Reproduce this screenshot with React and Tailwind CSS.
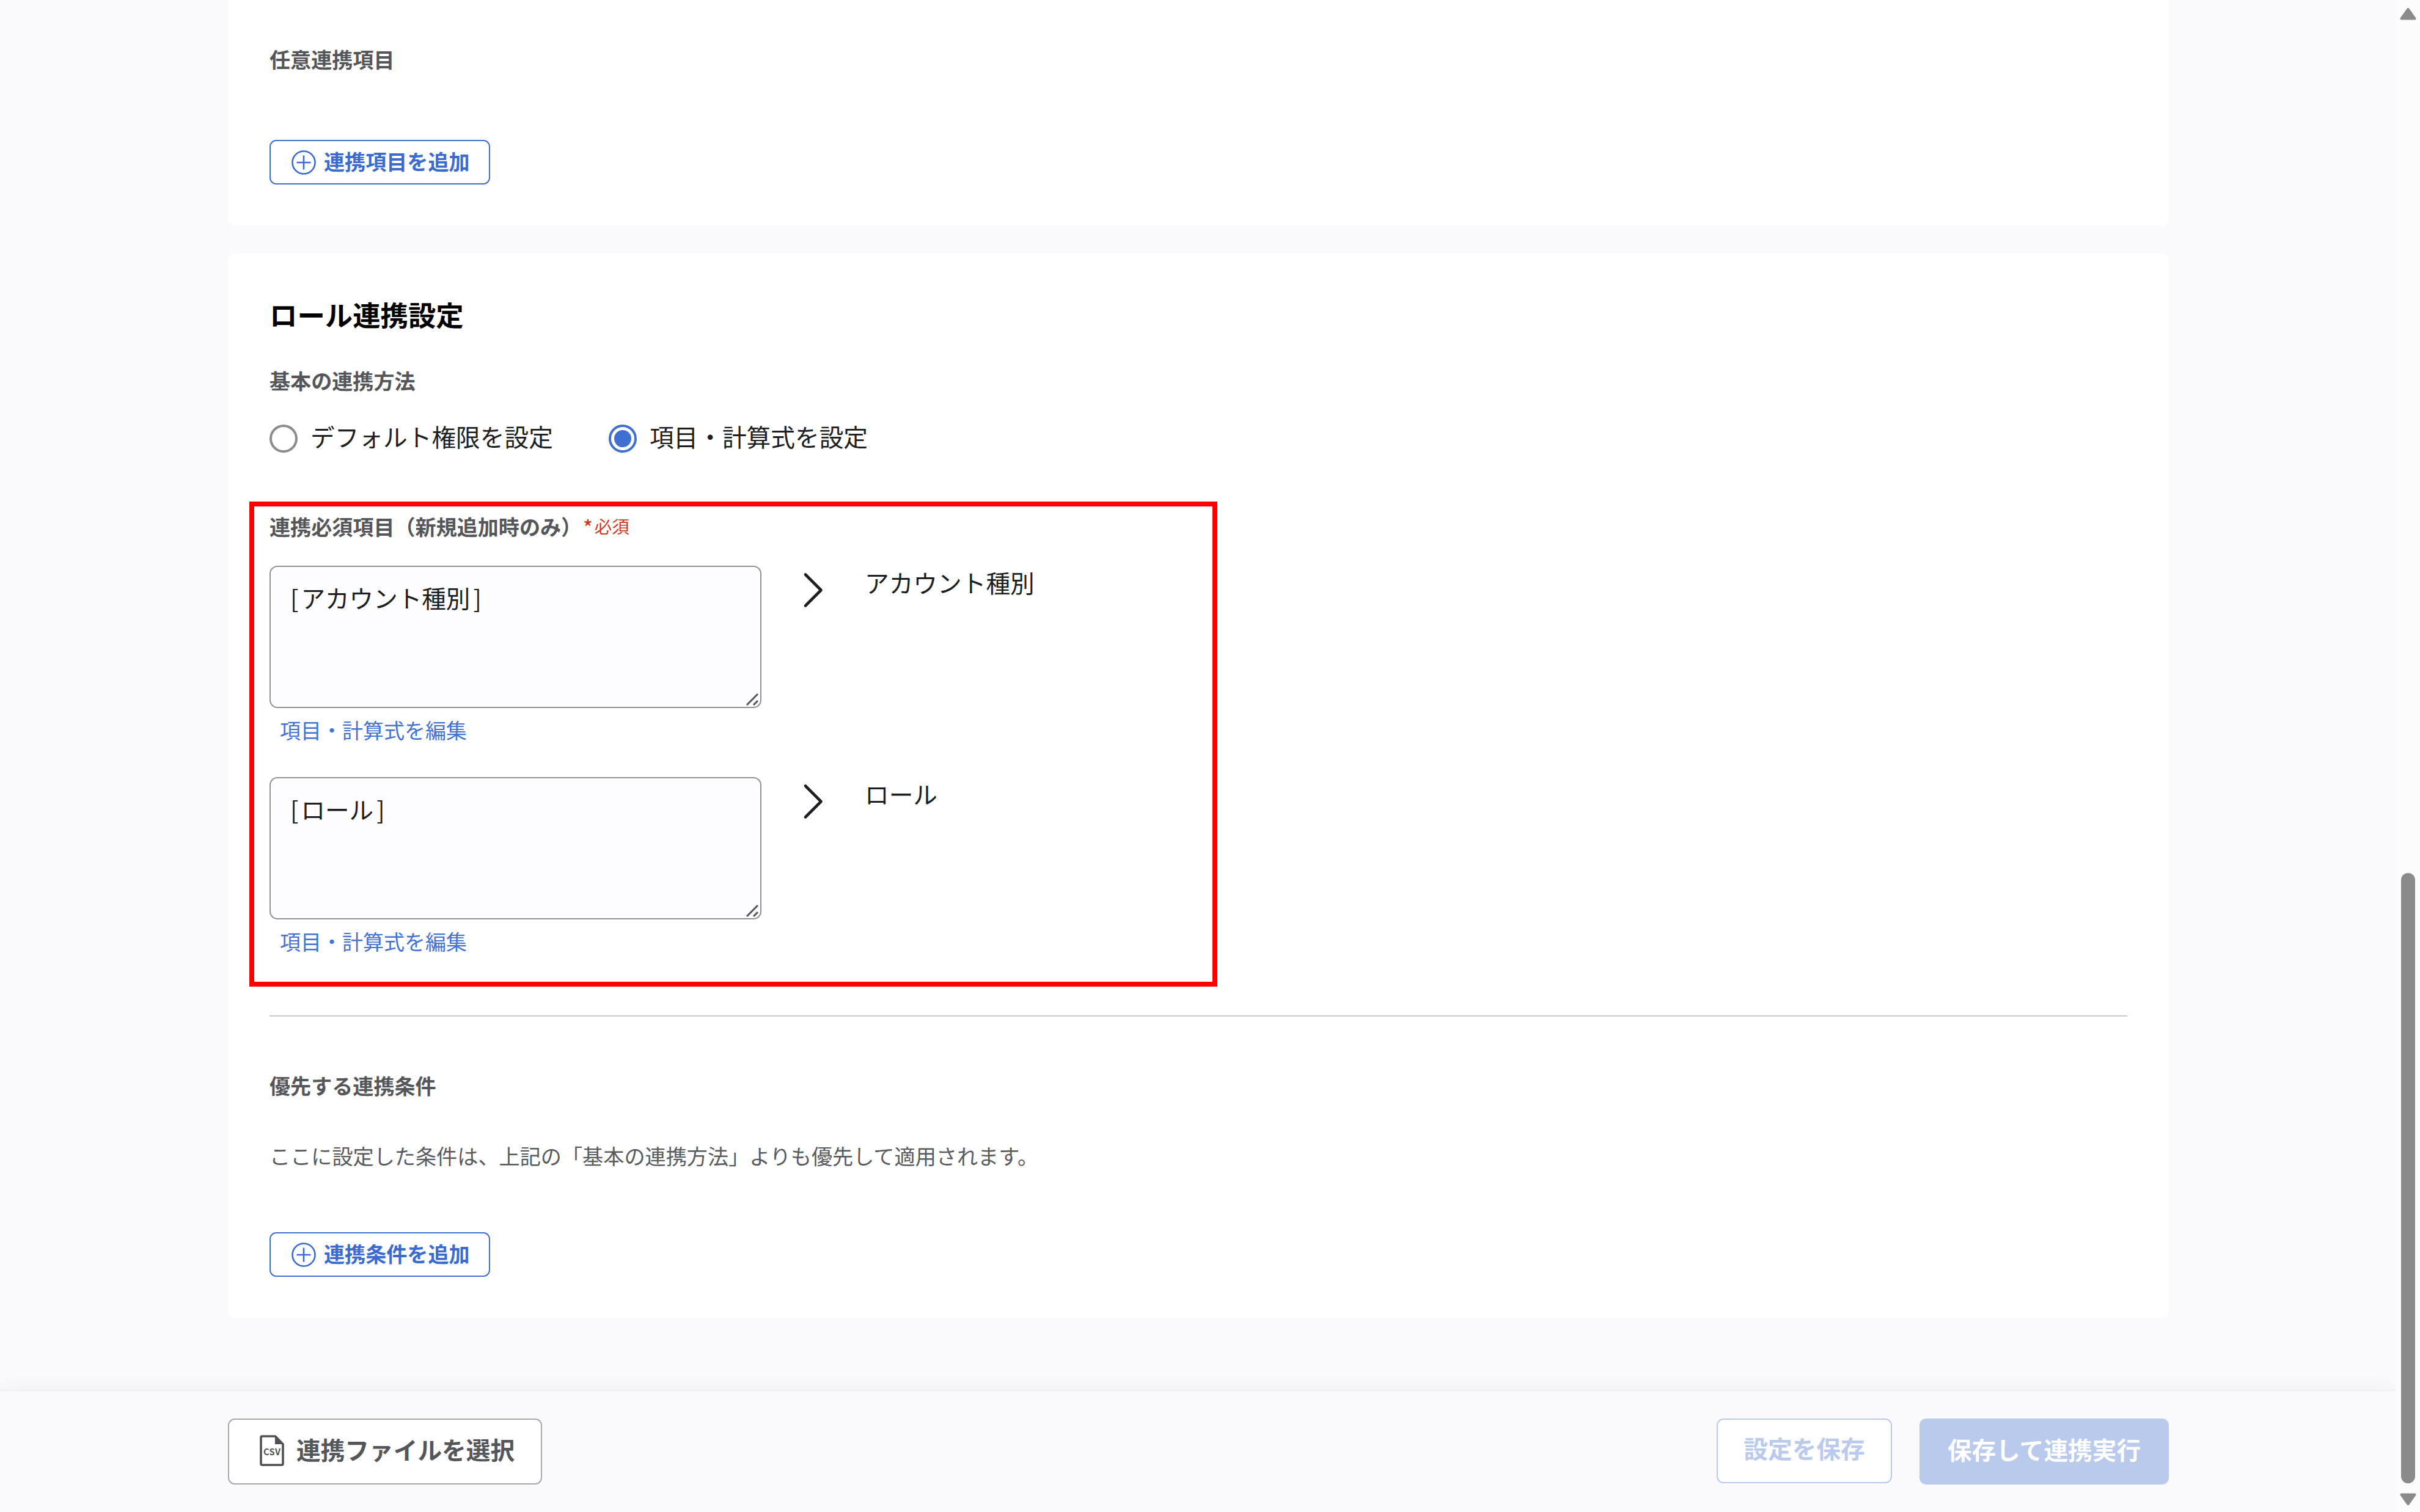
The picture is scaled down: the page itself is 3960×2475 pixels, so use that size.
import clsx from 'clsx';

const mappings = [
  { source: 'アカウント種別', target: 'アカウント種別' },
  { source: 'ロール', target: 'ロール' },
];

const AddButton = ({ label, className }) => (
  <button
    className={clsx(
      'flex h-[73px] w-[361px] items-center rounded-[11px] border-2 border-[#3f6fd1] bg-white pl-[34px] text-[#3b6bcf]',
      className
    )}
  >
    <svg className="h-10 w-10 shrink-0" viewBox="0 0 40 40" fill="none" stroke="currentColor" strokeWidth="2.6">
      <circle cx="20" cy="20" r="18.5" />
      <path d="M20 8.5v23M8.5 20h23" />
    </svg>
    <span className="ml-[13px] pb-[6px] text-[34.1px] leading-10 font-bold whitespace-nowrap">{label}</span>
  </button>
);

const Radio = ({ label, checked }) => (
  <label className="flex h-[46px] items-center gap-[21px]">
    <span
      className={clsx(
        'flex h-[46px] w-[46px] items-center justify-center rounded-full border-4 bg-white',
        checked ? 'border-[#3f6fd1]' : 'border-[#8c8c90]'
      )}
    >
      {checked && <span className="h-7 w-7 rounded-full bg-[#3f6fd1]"></span>}
    </span>
    <span className="pb-[9px] text-[39.7px] leading-10 whitespace-nowrap text-[#1d1e22]">{label}</span>
  </label>
);

const Subheading = ({ children, className }) => (
  <h3 className={clsx('text-[34.1px] leading-10 font-bold whitespace-nowrap text-[#55565a]', className)}>{children}</h3>
);

const MappingRow = ({ source, target }) => (
  <div className="flex items-start">
    <div className="w-[805px]">
      <div className="relative h-[233px] rounded-[13px] border-2 border-[#929296] bg-[#fdfdff] pt-5 pl-8 text-[39.6px] leading-[60px] text-[#1d1e22]">
        <span className="mr-1">[</span>
        {source}
        <span className="ml-[5px]">]</span>
        <svg className="absolute right-[3px] bottom-[2px] h-5 w-5" viewBox="0 0 20 20" stroke="#55565a" strokeWidth="3">
          <path d="M1 19L19 1M12 19L19 12" />
        </svg>
      </div>
      <a className="mt-4 ml-[17px] block text-[34px] leading-10 whitespace-nowrap text-[#4573d2]">項目・計算式を編集</a>
    </div>
    <svg
      className="mt-[11px] ml-[68px] h-[58px] w-[34px]"
      viewBox="0 0 34 58"
      fill="none"
      stroke="#1d1e22"
      strokeWidth="4.6"
      strokeLinecap="round"
      strokeLinejoin="round"
    >
      <path d="M4 3.5L29.5 29L4 54.5" />
    </svg>
    <span className="ml-[67px] text-[39.7px] leading-[54px] whitespace-nowrap text-[#1d1e22]">{target}</span>
  </div>
);

const CsvIcon = () => (
  <svg className="mb-1 h-[51px] w-10 shrink-0" viewBox="0 0 40 51" fill="none">
    <path d="M25.5 2H4Q2 2 2 4V47Q2 49 4 49H36Q38 49 38 47V15Z" stroke="#505155" strokeWidth="3.6" strokeLinejoin="round" />
    <path d="M25 1V15H39Z" fill="#505155" />
    <text x="20" y="33" textAnchor="middle" fontSize="14.5" fontWeight="700" textLength="28" fill="#505155">
      CSV
    </text>
  </svg>
);

const Scrollbar = () => (
  <div className="z-10 flex w-10 shrink-0 flex-col items-center bg-[#fcfcfd] pl-px">
    <svg className="mt-3 h-[21px] w-[27px] shrink-0" viewBox="0 0 27 21" fill="#8b8b8b" stroke="#8b8b8b" strokeWidth="4" strokeLinejoin="round">
      <path d="M13.5 3L24.5 18.5H2.5Z" />
    </svg>
    <div className="mt-[1396px] h-[999px] w-[23px] rounded-full bg-[#8b8b8b]"></div>
    <svg className="mt-4 h-[21px] w-[27px] shrink-0" viewBox="0 0 27 21" fill="#8b8b8b" stroke="#8b8b8b" strokeWidth="4" strokeLinejoin="round">
      <path d="M13.5 18L24.5 2.5H2.5Z" />
    </svg>
  </div>
);

export default function App() {
  return (
    <div className="flex h-[2475px] w-[3960px] overflow-hidden bg-[#fafafc] font-['Noto_Sans_CJK_JP',sans-serif]" lang="ja">
      <div className="flex w-[3920px] flex-col">
        <main className="h-[2275px] pl-[373px]">
          <section className="h-[369px] w-[3176px] rounded-b-xl bg-white px-[68px] pt-[76px]">
            <Subheading>任意連携項目</Subheading>
            <AddButton label="連携項目を追加" className="mt-[113px]" />
          </section>

          <section className="mt-[46px] h-[1742px] w-[3176px] rounded-xl bg-white px-[68px] pt-[69px]">
            <h2 className="text-[45.4px] leading-[60px] font-bold text-black">ロール連携設定</h2>
            <Subheading className="mt-[58px]">基本の連携方法</Subheading>
            <div className="mt-[53px] flex gap-[91px]">
              <Radio label="デフォルト権限を設定" />
              <Radio label="項目・計算式を設定" checked />
            </div>

            <div className="relative mt-[100px]">
              <div className="flex">
                <Subheading>連携必須項目（新規追加時のみ）</Subheading>
                <span className="ml-[2px] flex gap-[3px] text-[28.5px] leading-10 text-[#cb3a28]">
                  <span className="text-[32px] font-medium">*</span>
                  <span>必須</span>
                </span>
              </div>
              <div className="mt-[45px] flex flex-col gap-[57px]">
                {mappings.map((item) => (
                  <MappingRow key={item.target} source={item.source} target={item.target} />
                ))}
              </div>
              {/* highlight frame */}
              <div className="pointer-events-none absolute -top-5 -left-[33px] h-[794px] w-[1584px] border-8 border-[#ff0000]"></div>
            </div>

            <div className="mt-[101px] h-[2px] bg-[#c9c9cc]"></div>

            <Subheading className="mt-[92px]">優先する連携条件</Subheading>
            <p className="mt-[75px] text-[34.15px] leading-10 whitespace-nowrap text-[#5a5b5f]">
              ここに設定した条件は、上記の「基本の連携方法」よりも優先して適用されます。
            </p>
            <AddButton label="連携条件を追加" className="mt-[106px]" />
          </section>
        </main>

        <footer className="flex h-[200px] items-start border-t-2 border-[#efeff1] bg-[#fafafd] pt-[45px] pl-[373px] text-[39.7px] font-bold whitespace-nowrap shadow-[0_-4px_28px_rgba(0,0,0,0.035)]">
          <button className="flex h-[108px] w-[514px] items-center rounded-[11px] border-2 border-[#a9a9ac] bg-white pl-[50px] text-[#55565a]">
            <CsvIcon />
            <span className="ml-5 pb-[9px] leading-[50px]">連携ファイルを選択</span>
          </button>
          <div className="ml-[1922px] flex gap-[45px]">
            <button className="h-[106px] w-[287px] rounded-[11px] border-2 border-[#b9caed] bg-white pb-[11px] text-[#b9caed]">設定を保存</button>
            <button className="h-[108px] w-[408px] rounded-[11px] bg-[#b9caec] pb-[9px] text-white">保存して連携実行</button>
          </div>
        </footer>
      </div>
      <Scrollbar />
    </div>
  );
}
